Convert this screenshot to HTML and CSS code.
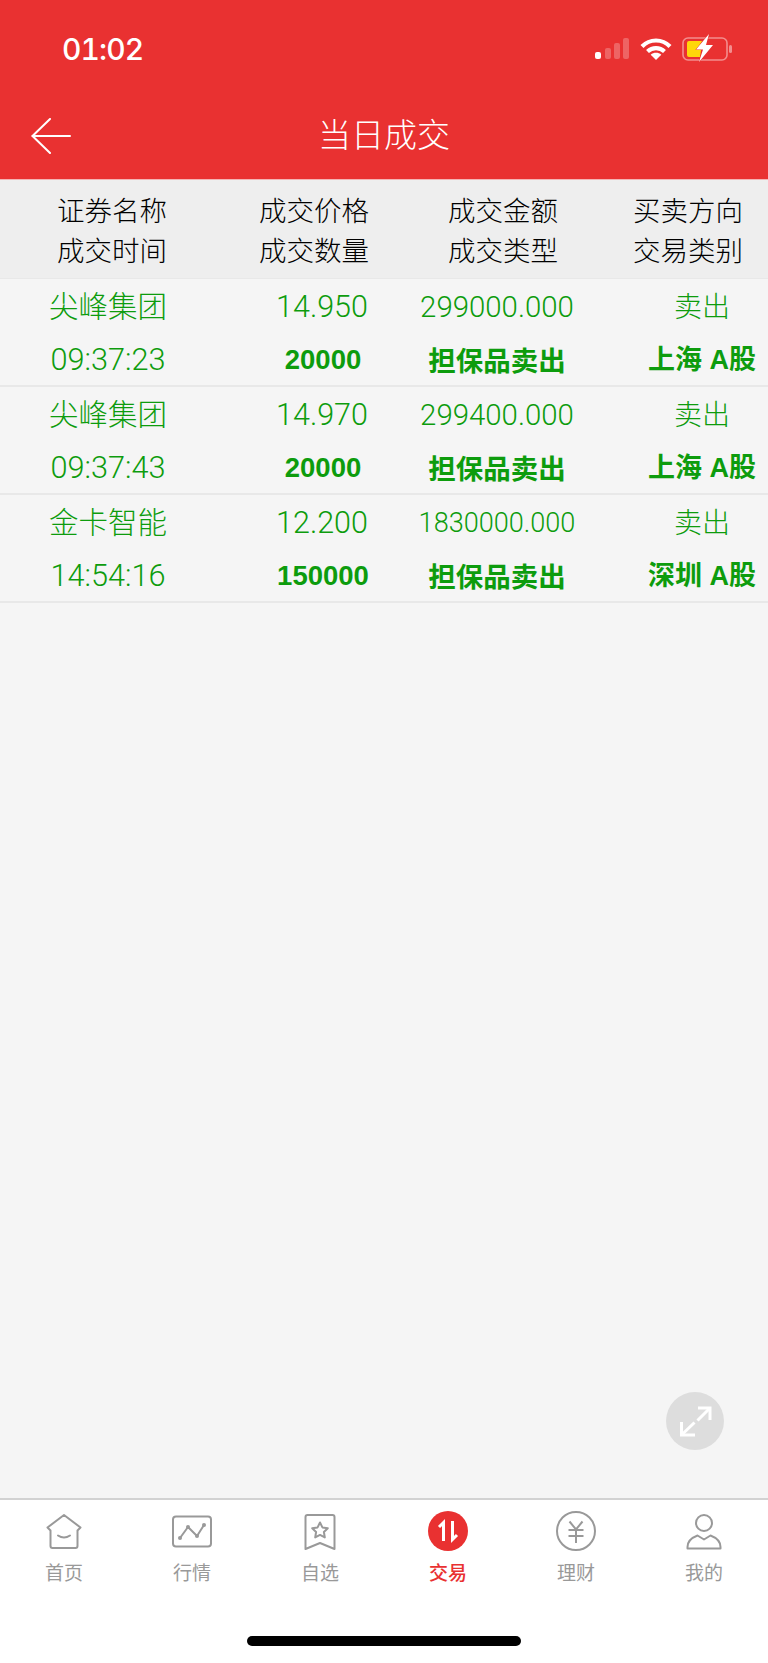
FILE: index.html
```html
<!DOCTYPE html>
<html lang="zh-CN">
<head>
<meta charset="utf-8">
<title>当日成交</title>
<link rel="stylesheet" href="styles.css">
</head>
<body>
<div class="app">
  <header class="top">
    <div class="status">
      <span class="clock">01:02</span>
      <div class="status-icons">
        <svg class="signal" width="34" height="21" viewBox="0 0 34 21"><rect x="0" y="14" width="6" height="7" rx="2" fill="#fff"/><rect x="10" y="10" width="6" height="11" rx="2" fill="#fff" opacity=".25"/><rect x="19" y="5" width="6" height="16" rx="2" fill="#fff" opacity=".25"/><rect x="28" y="0" width="6" height="21" rx="2" fill="#fff" opacity=".25"/></svg>
        <svg class="wifi" width="32" height="23" viewBox="0 0 32 23" fill="none" stroke="#fff" stroke-width="4.2"><path d="M2 9.500C9.800 1.500 22.200 1.500 30 9.500"/><path d="M7.500 14.500C12.300 10 19.700 10 24.500 14.500"/><path d="M16 23l-5.300-5.200c3-2.600 7.600-2.600 10.600 0z" fill="#fff" stroke="none"/></svg>
        <svg class="battery" width="50" height="28" viewBox="0 0 50 28"><rect x="1" y="4" width="44" height="22" rx="5" fill="none" stroke="#fff" stroke-opacity=".45" stroke-width="1.600"/><rect x="47" y="11" width="3" height="8" rx="1.500" fill="#fff" opacity=".45"/><path d="M5 9a2 2 0 0 1 2-2h13l-5 9h4l-1 7H7a2 2 0 0 1-2-2z" fill="#ffd60a"/><path d="M27 0l-13 15.500h7l-4 12.500 14-17h-7z" fill="#fff" stroke="#e93131" stroke-width="1" paint-order="stroke"/></svg>
      </div>
    </div>
    <div class="nav">
      <svg class="back" width="40" height="36" viewBox="0 0 40 36" fill="none" stroke="#fff" stroke-width="2" stroke-linecap="round" stroke-linejoin="round"><path d="M19 1L1.500 18L19 35"/><path d="M1.500 18H39"/></svg>
      <h1 class="title">当日成交</h1>
    </div>
  </header>

  <main class="content">
    <div class="thead">
      <span>证券名称</span><span>成交价格</span><span>成交金额</span><span>买卖方向</span>
      <span>成交时间</span><span>成交数量</span><span>成交类型</span><span>交易类别</span>
    </div>

    <div class="row">
      <span class="cell name">尖峰集团</span><span class="cell price">14.950</span><span class="cell amt">299000.000</span><span class="cell dir">卖出</span>
      <span class="cell time">09:37:23</span><span class="cell qty">20000</span><span class="cell kind">担保品卖出</span><span class="cell market">上海 A股</span>
    </div>
    <div class="row">
      <span class="cell name">尖峰集团</span><span class="cell price">14.970</span><span class="cell amt">299400.000</span><span class="cell dir">卖出</span>
      <span class="cell time">09:37:43</span><span class="cell qty">20000</span><span class="cell kind">担保品卖出</span><span class="cell market">上海 A股</span>
    </div>
    <div class="row">
      <span class="cell name">金卡智能</span><span class="cell price">12.200</span><span class="cell amt long">1830000.000</span><span class="cell dir">卖出</span>
      <span class="cell time">14:54:16</span><span class="cell qty">150000</span><span class="cell kind">担保品卖出</span><span class="cell market">深圳 A股</span>
    </div>

    <button class="expand" type="button" aria-label="expand">
      <svg width="58" height="58" viewBox="0 0 58 58" fill="none" stroke="#fff" stroke-width="3"><path d="M32 16H44V28"/><path d="M44 16L31.500 28.500"/><path d="M29 43H15.500V30"/><path d="M15.500 43L28.500 30.500"/></svg>
    </button>
  </main>

  <nav class="tabs">
    <div class="tab">
      <svg width="40" height="40" viewBox="0 0 40 40" fill="none" stroke="#999" stroke-width="2" stroke-linejoin="round" stroke-linecap="round"><path d="M6.500 19.500L3.500 16.500L20 4L36.500 16.500L33.500 19.500V35a2 2 0 0 1-2 2H8.500a2 2 0 0 1-2-2Z"/><path d="M14 24.500q6 4 12 0"/></svg>
      <span>首页</span>
    </div>
    <div class="tab">
      <svg width="40" height="40" viewBox="0 0 40 40" fill="none" stroke="#999" stroke-width="2" stroke-linejoin="round"><rect x="1" y="5.500" width="38" height="30" rx="3"/><path d="M8 27L16 16L25 25L32 14"/><circle cx="8" cy="27" r="2" fill="#999" stroke="none"/><circle cx="16" cy="16" r="2" fill="#999" stroke="none"/><circle cx="25" cy="25" r="2" fill="#999" stroke="none"/><circle cx="32" cy="14" r="2" fill="#999" stroke="none"/></svg>
      <span>行情</span>
    </div>
    <div class="tab">
      <svg width="40" height="40" viewBox="0 0 40 40" fill="none" stroke="#999" stroke-width="2" stroke-linejoin="round"><path d="M5.500 6a2 2 0 0 1 2-2h25a2 2 0 0 1 2 2V38L20 32L5.500 38Z"/><path d="M20 11.500l2.400 4.900 5.400.8-3.900 3.800.9 5.400-4.800-2.500-4.800 2.500.9-5.400-3.900-3.800 5.400-.8z"/></svg>
      <span>自选</span>
    </div>
    <div class="tab active">
      <svg width="40" height="40" viewBox="0 0 40 40" fill="none" stroke="#fff" stroke-width="3"><circle cx="20" cy="20" r="20" fill="#e93131" stroke="none"/><path d="M15.500 30V11.500L11 16"/><path d="M24.500 10V28.500L29 24"/></svg>
      <span>交易</span>
    </div>
    <div class="tab">
      <svg width="40" height="40" viewBox="0 0 40 40" fill="none" stroke="#999" stroke-width="2"><circle cx="20" cy="20" r="19"/><path d="M13.500 10.500L20 18.500L26.500 10.500"/><path d="M12.500 19H27.500"/><path d="M12.500 25H27.500"/><path d="M20 18.500V32"/></svg>
      <span>理财</span>
    </div>
    <div class="tab">
      <svg width="40" height="40" viewBox="0 0 40 40" fill="none" stroke="#999" stroke-width="2" stroke-linejoin="round"><circle cx="20" cy="12" r="8"/><path d="M3.500 36c0-6 3.500-9 10-11.500L20 28.500l6.500-4c6.500 2.500 10 5.500 10 11.500v1.500H3.500Z"/></svg>
      <span>我的</span>
    </div>
  </nav>

  <footer class="home-area"><div class="home-bar"></div></footer>
</div>
</body>
</html>
```
FILE: styles.css
```css
* { box-sizing: border-box; }
html, body { margin: 0; padding: 0; }
body { font-family: "Liberation Sans", "Noto Sans CJK SC", sans-serif; background: #fff; }
.app { width: 768px; height: 1663px; display: flex; flex-direction: column; overflow: hidden; }

.top { height: 180px; background: #e93131; border-bottom: 1px solid #f4b4b4; color: #fff; flex: none; }
.status { height: 100px; display: flex; justify-content: space-between; align-items: flex-start; padding: 33px 36px 0 62px; }
.clock { font-family: Inter, "Liberation Sans", sans-serif; font-weight: 500; font-size: 30px; line-height: 32px; font-variant-numeric: tabular-nums; letter-spacing: -.9px; }
.status-icons { display: flex; align-items: flex-start; }
.signal { margin-top: 5px; margin-right: 11px; }
.wifi { margin-top: 4px; margin-right: 10px; }
.battery { margin-top: 1px; }

.nav { height: 67px; display: flex; align-items: center; justify-content: center; position: relative; }
.back { position: absolute; left: 31px; top: 18px; }
.title { margin: 0; font-family: "Noto Sans CJK SC", sans-serif; font-weight: 300; font-size: 33px; line-height: 67px; }

.content { flex: 1; background: #f5f5f5; position: relative; }
.thead { display: grid; grid-template-columns: 224px 180px 198px 166px; grid-auto-rows: 40px; height: 99px; padding-top: 9px; background: #eee; border-bottom: 1px solid #e8e8e8; text-align: center; color: #000; font-family: "Noto Sans CJK SC", sans-serif; font-weight: 300; font-size: 27.500px; }
.thead span { line-height: 40px; }
.thead span:nth-child(4n) { padding-left: 6px; }

.row { display: grid; grid-template-columns: 216px 202px 158px 192px; grid-auto-rows: 50px; row-gap: 4px; height: 108px; padding-top: 2px; border-bottom: 2px solid #e8e8e8; color: #0d9c0d; text-align: center; }
.cell { line-height: 50px; white-space: nowrap; }
.name { font-family: "Noto Sans CJK SC", sans-serif; font-weight: 300; font-size: 29.500px; line-height: 47px; }
.time { font-family: Roboto, sans-serif; font-weight: 300; font-size: 30.700px; }
.price { font-family: Roboto, sans-serif; font-weight: 300; font-size: 30.500px; padding-left: 10px; line-height: 51px; }
.qty { font-size: 27.500px; font-weight: 700; padding-left: 12px; }
.amt { font-family: Roboto, sans-serif; font-weight: 300; font-size: 29.400px; line-height: 52px; }
.amt.long { font-size: 27.100px; }
.kind { font-family: "Noto Sans CJK SC", sans-serif; font-size: 27.500px; font-weight: 700; line-height: 48px; }
.dir { font-family: "Noto Sans CJK SC", sans-serif; font-weight: 300; font-size: 28px; padding-left: 60px; line-height: 48px; }
.market { font-size: 27px; font-weight: 700; padding-left: 60px; }

.expand { position: absolute; right: 44px; top: 1212px; width: 58px; height: 58px; padding: 0; border: 0; border-radius: 50%; background: #ddd; display: block; }
.expand svg { display: block; }

.tabs { flex: none; height: 102px; display: grid; grid-template-columns: repeat(6, 128px); background: #fff; border-top: 2px solid #d2d2d2; padding-top: 11px; }
.tab { display: flex; flex-direction: column; align-items: center; color: #999; font-family: "Noto Sans CJK SC", sans-serif; font-size: 19px; }
.tab svg { display: block; }
.tab span { line-height: 26px; margin-top: 8px; }
.tab.active { color: #e93131; font-weight: 500; }

.home-area { flex: none; height: 63px; background: #fff; display: flex; justify-content: center; padding-top: 36px; }
.home-bar { width: 274px; height: 10px; border-radius: 5px; background: #000; }
```
